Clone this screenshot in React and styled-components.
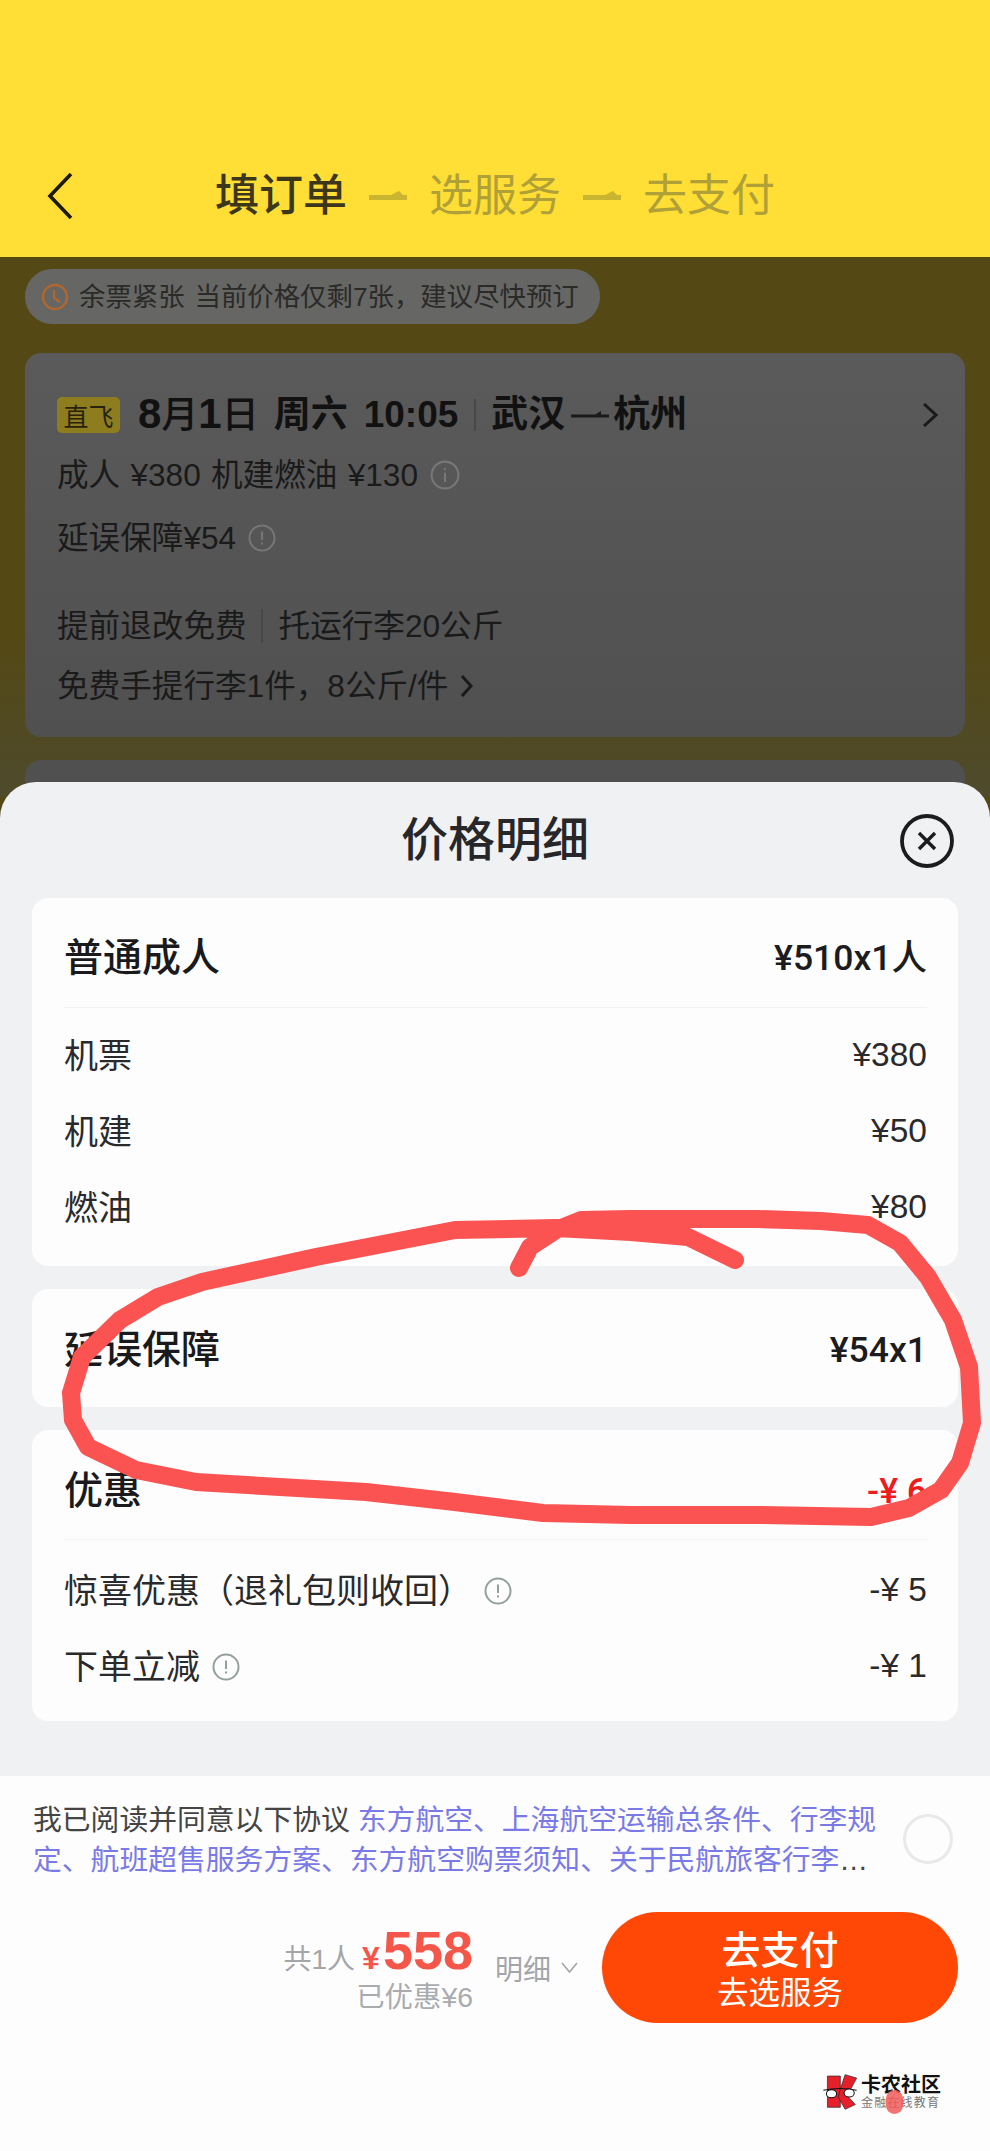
import React from "react";
import styled, { createGlobalStyle } from "styled-components";

const sans = `"Liberation Sans", "Noto Sans CJK SC", sans-serif`;

const GlobalStyle = createGlobalStyle`
  html, body {
    margin: 0;
    padding: 0;
    background: #fff;
  }
  * {
    box-sizing: border-box;
  }
`;

// the red pen stroke, traced from the screenshot
const scribblePoints = [
  [519, 1268], [530, 1247], [556, 1230], [581, 1220], [631, 1219], [758, 1219],
  [821, 1221], [868, 1225], [900, 1243], [928, 1277], [953, 1320], [969, 1367],
  [972, 1423], [960, 1463], [941, 1490], [909, 1508], [871, 1517], [758, 1515],
  [631, 1515], [543, 1513], [455, 1502], [366, 1492], [196, 1482], [136, 1470],
  [88, 1447], [73, 1420], [71, 1393], [82, 1357], [120, 1320], [158, 1297],
  [202, 1282], [316, 1257], [455, 1230], [556, 1228], [631, 1232], [688, 1237],
  [735, 1260],
];

const StepDash = () => (
  <DashIcon viewBox="0 0 38 12">
    <path d="M0 5H38V10H0Z" fill="currentColor" />
    <path d="M22 5L30 1L34 5Z" fill="currentColor" />
  </DashIcon>
);

const InfoIcon = ({ size = 28, color = "#8f9694", mark = "!" }) => (
  <svg width={size} height={size} viewBox="0 0 28 28" style={{ flexShrink: 0 }}>
    <circle cx="14" cy="14" r="12.5" fill="none" stroke={color} strokeWidth="2" />
    {mark === "!" ? (
      <path d="M14 7.5V16M14 18.5V20.5" stroke={color} strokeWidth="2" />
    ) : (
      <path d="M14 7.5V9.5M14 12V20.5" stroke={color} strokeWidth="2" />
    )}
  </svg>
);

const App = () => {
  return (
    <>
      <GlobalStyle />
      <Page>
        <Header>
          <BackIcon viewBox="0 0 26 48">
            <path d="M24 2L3 24L24 46" fill="none" stroke="#1d1a0a" strokeWidth="3.6" />
          </BackIcon>
          <Steps>
            <Step $active>填订单</Step>
            <StepDash />
            <Step>选服务</Step>
            <StepDash />
            <Step>去支付</Step>
          </Steps>
        </Header>

        <Backdrop>
          <Notice>
            <svg width="28" height="28" viewBox="0 0 28 28">
              <circle cx="14" cy="14" r="12" fill="none" stroke="#b4672c" strokeWidth="2.4" />
              <path d="M13 7V15L19 19" fill="none" stroke="#b4672c" strokeWidth="2.2" />
            </svg>
            <NoticeText>余票紧张</NoticeText>
            <NoticeText>当前价格仅剩7张，建议尽快预订</NoticeText>
          </Notice>

          <FlightCard>
            <FlightTitle>
              <Tag>直飞</Tag>
              <Bold>
                <Big>8</Big>月<Big>1</Big>日
              </Bold>
              <Bold $gap={15} $heavy>周六</Bold>
              <Bold $gap={16} $heavy>10:05</Bold>
              <TitleBar />
              <Bold $heavy>武汉</Bold>
              <svg width="40" height="12" viewBox="0 0 40 12" style={{ margin: "0 2px 0 6px" }}>
                <path d="M0 7H38" stroke="#1a1a1a" strokeWidth="3" />
                <path d="M22 7L30 2V7Z" fill="#1a1a1a" />
              </svg>
              <Bold $heavy>杭州</Bold>
              <TitleChevron viewBox="0 0 16 24">
                <path d="M2 1L14 12L2 23" fill="none" stroke="#1a1a1a" strokeWidth="3" />
              </TitleChevron>
            </FlightTitle>
            <FlightLine $top={21}>
              成人 ¥380 机建燃油 ¥130
              <InfoIcon size={30} color="#777" mark="i" />
            </FlightLine>
            <FlightLine $top={23}>
              延误保障¥54
              <InfoIcon size={28} color="#777" />
            </FlightLine>
            <FlightLine $top={48}>
              提前退改免费
              <LineBar />
              托运行李20公斤
            </FlightLine>
            <FlightLine $top={20}>
              免费手提行李1件，8公斤/件
              <svg width="13" height="24" viewBox="0 0 13 24">
                <path d="M2 2L11 12L2 22" fill="none" stroke="#1a1a1a" strokeWidth="3" />
              </svg>
            </FlightLine>
          </FlightCard>

          <CardStub />
        </Backdrop>

        <Sheet>
          <SheetHead>
            <SheetTitle>价格明细</SheetTitle>
            <CloseIcon viewBox="0 0 54 54">
              <circle cx="27" cy="27" r="25" fill="none" stroke="#1c1c1e" strokeWidth="3.8" />
              <path d="M19 19L35 35M35 19L19 35" stroke="#1c1c1e" strokeWidth="3.4" />
            </CloseIcon>
          </SheetHead>

          <Panels>
            <Panel $height={368}>
              <PanelHead $top={10}>
                <HeadLabel>普通成人</HeadLabel>
                <HeadValue>¥510x1人</HeadValue>
              </PanelHead>
              <Rows>
                <PriceRow>
                  <RowLabel>机票</RowLabel>
                  <RowValue>¥380</RowValue>
                </PriceRow>
                <PriceRow>
                  <RowLabel>机建</RowLabel>
                  <RowValue>¥50</RowValue>
                </PriceRow>
                <PriceRow>
                  <RowLabel>燃油</RowLabel>
                  <RowValue>¥80</RowValue>
                </PriceRow>
              </Rows>
            </Panel>

            <Panel $height={118}>
              <PanelHead $plain $top={4}>
                <HeadLabel>延误保障</HeadLabel>
                <HeadValue>¥54x1</HeadValue>
              </PanelHead>
            </Panel>

            <Panel $height={291}>
              <PanelHead $top={12}>
                <HeadLabel>优惠</HeadLabel>
                <HeadValue $red>-¥ 6</HeadValue>
              </PanelHead>
              <Rows $top={13}>
                <PriceRow>
                  <RowLabel $withIcon>
                    惊喜优惠（退礼包则收回）
                    <InfoIcon color="#93a09c" />
                  </RowLabel>
                  <RowValue>-¥ 5</RowValue>
                </PriceRow>
                <PriceRow>
                  <RowLabel $withIcon>
                    下单立减
                    <InfoIcon color="#93a09c" />
                  </RowLabel>
                  <RowValue>-¥ 1</RowValue>
                </PriceRow>
              </Rows>
            </Panel>
          </Panels>

          <Footer>
            <Agreement>
              <AgreementText>
                我已阅读并同意以下协议{" "}
                <AgreementLink>
                  东方航空、上海航空运输总条件、行李规定、航班超售服务方案、东方航空购票须知、关于民航旅客行李
                </AgreementLink>
                …
              </AgreementText>
              <Check />
            </Agreement>

            <PayBar>
              <Totals>
                <TotalLine>
                  <Muted>共1人</Muted>
                  <Yen>¥</Yen>
                  <Amount>558</Amount>
                </TotalLine>
                <Saved>已优惠¥6</Saved>
              </Totals>
              <DetailToggle>
                明细
                <svg width="17" height="11" viewBox="0 0 17 11">
                  <path d="M1 1L8.5 10L16 1" fill="none" stroke="#a3a5a9" strokeWidth="1.6" />
                </svg>
              </DetailToggle>
              <PayButton>
                <PayMain>去支付</PayMain>
                <PaySub>去选服务</PaySub>
              </PayButton>
            </PayBar>
          </Footer>
        </Sheet>

        <Scribble viewBox="0 0 990 2151">
          <polyline
            points={scribblePoints.map((p) => p.join(",")).join(" ")}
            fill="none"
            stroke="#fb5252"
            strokeWidth="18"
            strokeLinecap="round"
            strokeLinejoin="round"
          />
        </Scribble>

        <Watermark>
          <svg width="36" height="36" viewBox="122 102 106 106">
            <path d="M138 108H176V200H138Z" fill="#e5202a" stroke="#222" strokeWidth="2" />
            <path d="M176 146L190 104L224 114L196 166L220 192L190 206L170 170Z" fill="#e5202a" stroke="#222" strokeWidth="2" />
            <path d="M126 150Q175 140 224 150" fill="none" stroke="#111" strokeWidth="3" />
            <ellipse cx="150" cy="160" rx="15" ry="12" fill="#fff" stroke="#111" strokeWidth="3" />
            <ellipse cx="202" cy="158" rx="15" ry="12" fill="#fff" stroke="#111" strokeWidth="3" />
          </svg>
          <WatermarkText>
            <WatermarkName>卡农社区</WatermarkName>
            <WatermarkSlogan>金融在线教育</WatermarkSlogan>
          </WatermarkText>
          <TouchDot />
        </Watermark>
      </Page>
    </>
  );
};

const Page = styled.div`
  position: relative;
  width: 990px;
  height: 2151px;
  overflow: hidden;
  font-family: ${sans};
  background: #544915;
`;

const Header = styled.div`
  display: flex;
  align-items: center;
  height: 257px;
  padding: 135px 0 0 47px;
  background: #ffde35;
`;

const BackIcon = styled.svg`
  width: 26px;
  height: 48px;
`;

const Steps = styled.div`
  display: flex;
  align-items: center;
  gap: 22px;
  margin-left: 142px;
`;

const Step = styled.span`
  font-size: 44px;
  line-height: 56px;
  font-weight: ${(p) => (p.$active ? 500 : 400)};
  color: ${(p) => (p.$active ? "#3d3719" : "#b0a038")};
`;

const DashIcon = styled.svg`
  width: 38px;
  height: 12px;
  color: #c9b52f;
`;

const Backdrop = styled.div`
  display: flex;
  flex-direction: column;
  align-items: flex-start;
  height: 540px;
  padding: 12px 25px 0;
  background: linear-gradient(#544915 0, #544915 380px, #4e4a2c 100%);
`;

const Notice = styled.div`
  display: flex;
  flex-shrink: 0;
  align-items: center;
  gap: 10px;
  width: 575px;
  height: 55px;
  padding-left: 16px;
  border-radius: 27px;
  background: #666664;
`;

const NoticeText = styled.span`
  font-size: 26.4px;
  line-height: 32px;
  color: #2a2a28;
`;

const FlightCard = styled.div`
  flex-shrink: 0;
  width: 940px;
  height: 384px;
  margin-top: 29px;
  padding: 43px 27px 0 32px;
  border-radius: 16px;
  background: linear-gradient(#5a5a5a, #505050);
`;

const FlightTitle = styled.div`
  display: flex;
  align-items: center;
  height: 38px;
`;

const Tag = styled.span`
  display: flex;
  align-items: center;
  justify-content: center;
  width: 63px;
  height: 36px;
  margin-right: 18px;
  border-radius: 5px;
  background: #8d7d1f;
  color: #27230e;
  font-size: 25px;
`;

const Bold = styled.span`
  margin-left: ${(p) => p.$gap || 0}px;
  font-size: 37px;
  line-height: 38px;
  font-weight: ${(p) => (p.$heavy ? 700 : 500)};
  color: #111;
`;

const Big = styled.span`
  font-size: 42px;
  font-weight: 700;
`;

const TitleBar = styled.span`
  width: 2px;
  height: 32px;
  margin: 0 15px 0 16px;
  background: #484848;
`;

const TitleChevron = styled.svg`
  width: 16px;
  height: 24px;
  margin-left: auto;
`;

const FlightLine = styled.div`
  display: flex;
  align-items: center;
  gap: 12px;
  margin-top: ${(p) => p.$top}px;
  height: 40px;
  font-size: 31.6px;
  line-height: 40px;
  word-spacing: 1.5px;
  color: #1a1a1a;
  white-space: pre;
`;

const LineBar = styled.span`
  width: 2px;
  height: 34px;
  margin: 0 4px 0 2px;
  background: #484848;
`;

const CardStub = styled.div`
  flex-shrink: 0;
  width: 940px;
  height: 40px;
  margin-top: 23px;
  border-radius: 16px 16px 0 0;
  background: #505050;
`;

const Sheet = styled.div`
  position: absolute;
  top: 782px;
  left: 0;
  right: 0;
  bottom: 0;
  display: flex;
  flex-direction: column;
  border-radius: 36px 36px 0 0;
  background: #f0f1f3;
  overflow: hidden;
`;

const SheetHead = styled.div`
  position: relative;
  display: flex;
  align-items: center;
  justify-content: center;
  height: 116px;
`;

const SheetTitle = styled.h2`
  margin: 0;
  font-size: 47px;
  line-height: 60px;
  font-weight: 500;
  color: #27272a;
`;

const CloseIcon = styled.svg`
  position: absolute;
  top: 32px;
  right: 36px;
  width: 54px;
  height: 54px;
`;

const Panels = styled.div`
  display: flex;
  flex-direction: column;
  gap: 23px;
  padding: 0 32px;
`;

const Panel = styled.section`
  height: ${(p) => p.$height}px;
  padding: 0 31px 0 32px;
  border-radius: 16px;
  background: #fdfdfd;
`;

const PanelHead = styled.div`
  display: flex;
  align-items: center;
  justify-content: space-between;
  height: ${(p) => (p.$plain ? 118 : 110)}px;
  padding-top: ${(p) => p.$top}px;
  border-bottom: ${(p) => (p.$plain ? "none" : "1px solid #f1f2f3")};
`;

const HeadLabel = styled.span`
  font-size: 39px;
  line-height: 48px;
  font-weight: 500;
  color: #1a1a1c;
`;

const HeadValue = styled.span`
  font-family: Roboto, "Noto Sans CJK SC", sans-serif;
  font-size: 35.5px;
  line-height: 44px;
  font-weight: 500;
  color: ${(p) => (p.$red ? "#ee1c1c" : "#1c1c1e")};
`;

const Rows = styled.div`
  display: flex;
  flex-direction: column;
  padding-top: ${(p) => p.$top || 10}px;
`;

const PriceRow = styled.div`
  display: flex;
  align-items: center;
  justify-content: space-between;
  height: 76px;
`;

const RowLabel = styled.span`
  display: flex;
  align-items: center;
  gap: ${(p) => (p.$withIcon ? 12 : 0)}px;
  font-size: 34px;
  line-height: 44px;
  color: #2a2a2c;
`;

const RowValue = styled.span`
  font-size: 33.5px;
  line-height: 40px;
  margin-bottom: 3px;
  color: #2a2a2c;
`;

const Footer = styled.div`
  flex: 1;
  margin-top: 55px;
  padding: 24px 32px 0 33px;
  background: #fdfdfd;
`;

const Agreement = styled.div`
  display: flex;
  align-items: center;
  justify-content: space-between;
`;

const AgreementText = styled.p`
  width: 850px;
  margin: 0;
  font-size: 28.8px;
  line-height: 40px;
  color: #444;
`;

const AgreementLink = styled.span`
  color: #7a7ae6;
`;

const Check = styled.span`
  width: 50px;
  height: 50px;
  margin: -2px 5px 0 0;
  border: 3px solid #e8e9eb;
  border-radius: 50%;
`;

const PayBar = styled.div`
  display: flex;
  align-items: center;
  justify-content: flex-end;
  margin-top: 32px;
`;

const Totals = styled.div`
  display: flex;
  flex-direction: column;
  align-items: flex-end;
  padding-bottom: 2px;
`;

const TotalLine = styled.div`
  display: flex;
  align-items: baseline;
  height: 60px;
`;

const Muted = styled.span`
  margin-right: 7px;
  font-size: 28px;
  color: #a3a5a9;
`;

const Yen = styled.span`
  margin-right: 3px;
  font-size: 32px;
  font-weight: 700;
  color: #f4574a;
`;

const Amount = styled.span`
  font-size: 54px;
  line-height: 60px;
  font-weight: 700;
  color: #f4574a;
`;

const Saved = styled.span`
  font-size: 28.4px;
  line-height: 34px;
  color: #a9abaf;
`;

const DetailToggle = styled.div`
  display: flex;
  align-items: center;
  gap: 10px;
  margin: 0 24px 0 22px;
  font-size: 28px;
  color: #a3a5a9;
`;

const PayButton = styled.button`
  display: flex;
  flex-direction: column;
  align-items: center;
  justify-content: center;
  width: 356px;
  height: 111px;
  padding: 4px 0 0;
  border: none;
  border-radius: 56px;
  background: #ff4706;
  color: #fff;
  font-family: ${sans};
`;

const PayMain = styled.span`
  font-size: 39px;
  line-height: 46px;
  font-weight: 500;
`;

const PaySub = styled.span`
  font-size: 31.5px;
  line-height: 38px;
`;

const Scribble = styled.svg`
  position: absolute;
  top: 0;
  left: 0;
  width: 990px;
  height: 2151px;
  pointer-events: none;
`;

const Watermark = styled.div`
  position: absolute;
  left: 822px;
  top: 2074px;
  display: flex;
  align-items: center;
  gap: 3px;
`;

const WatermarkText = styled.div`
  display: flex;
  flex-direction: column;
`;

const WatermarkName = styled.span`
  font-size: 20px;
  line-height: 22px;
  font-weight: 700;
  color: #111;
`;

const WatermarkSlogan = styled.span`
  font-size: 12px;
  line-height: 14px;
  letter-spacing: 1.2px;
  color: #777;
`;

const TouchDot = styled.span`
  position: absolute;
  left: 64px;
  top: 16px;
  width: 17px;
  height: 24px;
  border-radius: 9px;
  background: rgba(240, 90, 88, 0.85);
`;

export default App;
